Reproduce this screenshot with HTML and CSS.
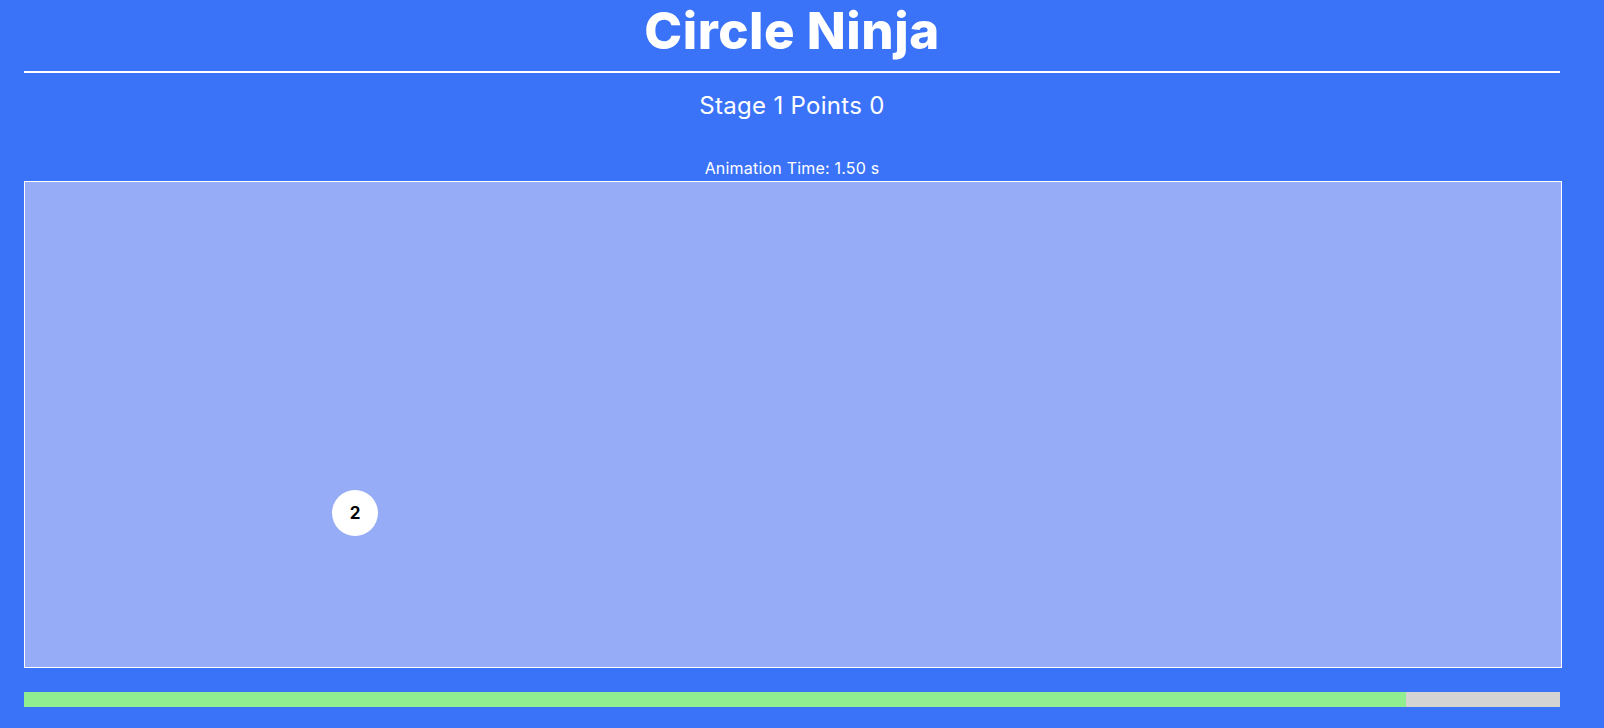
FILE: index.html
```html
<!DOCTYPE html>
<html lang="en">
<head>
<meta charset="utf-8">
<title>Circle Ninja</title>
<link rel="stylesheet" href="styles.css">
</head>
<body>
<main class="app">
  <h1 class="title">Circle Ninja</h1>
  <div class="rule"></div>
  <div class="score">Stage 1 Points 0</div>
  <div class="anim-time">Animation Time: 1.50 s</div>
  <div class="board">
    <div class="circle" style="left:307px; top:308px;">2</div>
  </div>
  <div class="progress">
    <div class="progress-fill" style="width:90%;"></div>
  </div>
</main>
</body>
</html>
```

FILE: styles.css
```css
html, body {
  margin: 0;
  padding: 0;
}
body {
  background: #3a73f8;
  color: #ffffff;
  font-family: Inter, "Open Sans", "DejaVu Sans", sans-serif;
  height: 728px;
  overflow: hidden;
}
.app {
  width: 1536px;
  margin-left: 24px;
  display: flex;
  flex-direction: column;
}
.title {
  margin: 0;
  font-size: 51px;
  line-height: 62px;
  height: 62px;
  font-weight: 800;
  text-align: center;
  letter-spacing: 0.5px;
}
.rule {
  margin-top: 9px;
  height: 2px;
  background: #ffffff;
}
.score {
  margin-top: 18px;
  font-size: 24px;
  line-height: 30px;
  text-align: center;
  letter-spacing: 0.3px;
}
.anim-time {
  margin-top: 37px;
  font-size: 16px;
  line-height: 20px;
  text-align: center;
  letter-spacing: 0.2px;
}
.board {
  position: relative;
  margin-top: 3px;
  width: 1536px;
  height: 485px;
  border: 1px solid #ffffff;
  background: #97acf6;
}
.circle {
  position: absolute;
  width: 46px;
  height: 46px;
  border-radius: 50%;
  background: #ffffff;
  color: #000000;
  font-weight: 700;
  font-size: 17px;
  display: flex;
  align-items: center;
  justify-content: center;
}
.progress {
  margin-top: 24px;
  height: 15px;
  background: #d3d3d3;
}
.progress-fill {
  height: 100%;
  background: #90ee90;
}
```
